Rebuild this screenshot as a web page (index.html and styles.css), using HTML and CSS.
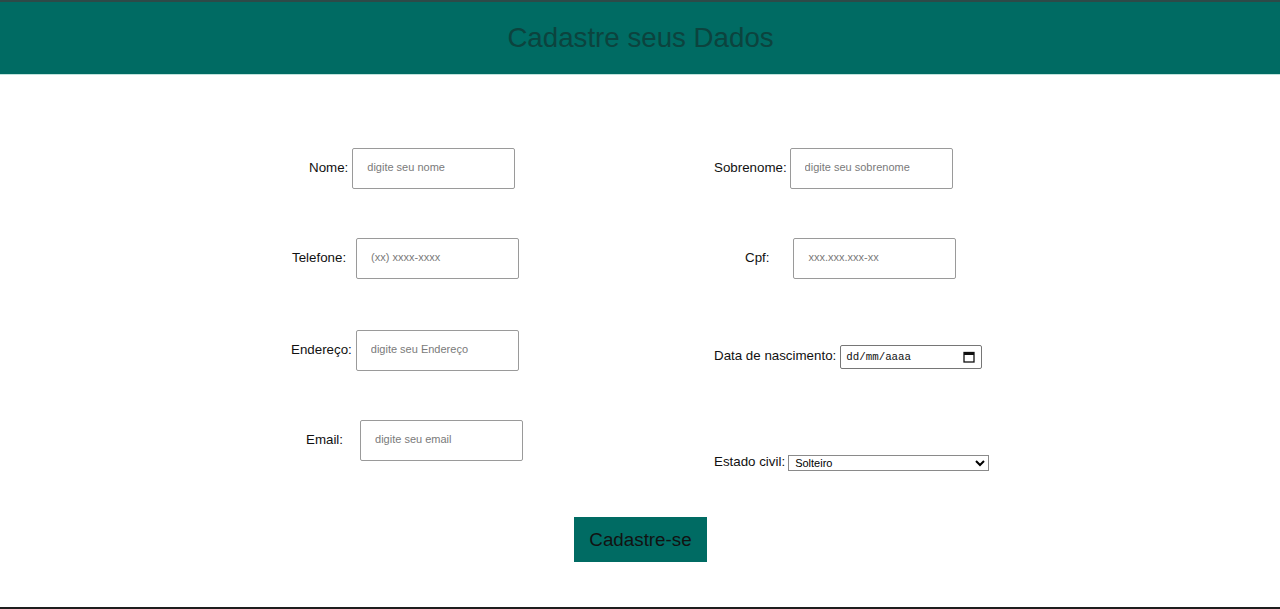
FILE: index.html
```html
<!DOCTYPE html>
<html lang="pt-BR">
<head>
<meta charset="utf-8">
<title>Cadastro</title>
<link rel="stylesheet" href="styles.css">
</head>
<body>
<header class="topbar">
  <h1 class="title">Cadastre seus Dados</h1>
</header>
<main class="main">
  <form class="form">
    <div class="columns">
      <div class="col">
        <div class="field f-nome">
          <label class="label" for="nome">Nome:</label>
          <input class="text-input" id="nome" type="text" placeholder="digite seu nome">
        </div>
        <div class="field f-tel">
          <label class="label" for="tel">Telefone:</label>
          <input class="text-input" id="tel" type="text" placeholder="(xx) xxxx-xxxx">
        </div>
        <div class="field f-end">
          <label class="label" for="end">Endereço:</label>
          <input class="text-input" id="end" type="text" placeholder="digite seu Endereço">
        </div>
        <div class="field f-email">
          <label class="label" for="email">Email:</label>
          <input class="text-input" id="email" type="text" placeholder="digite seu email">
        </div>
      </div>
      <div class="col">
        <div class="field f-sobre">
          <label class="label" for="sobre">Sobrenome:</label>
          <input class="text-input" id="sobre" type="text" placeholder="digite seu sobrenome">
        </div>
        <div class="field f-cpf">
          <label class="label" for="cpf">Cpf:</label>
          <input class="text-input" id="cpf" type="text" placeholder="xxx.xxx.xxx-xx">
        </div>
        <div class="field f-data">
          <label class="label">Data de nascimento:</label>
          <div class="date-box">
            <span class="date-text">dd/mm/aaaa</span>
            <svg class="cal" width="12" height="12" viewBox="0 0 12 12"><rect x="1" y="1.5" width="10" height="9.5" fill="none" stroke="#111" stroke-width="1.3"/><rect x="1" y="1.5" width="10" height="2.5" fill="#111"/></svg>
          </div>
        </div>
        <div class="field f-estado">
          <label class="label" for="estado">Estado civil:</label>
          <select class="select" id="estado">
            <option>Solteiro</option>
            <option>Casado</option>
            <option>Divorciado</option>
            <option>Viúvo</option>
          </select>
        </div>
      </div>
    </div>
    <div class="actions">
      <button class="btn" type="button">Cadastre-se</button>
    </div>
  </form>
</main>
<div class="bottom-line"></div>
</body>
</html>
```

FILE: styles.css
```css
* { box-sizing: border-box; }
html, body { margin: 0; padding: 0; }
body {
  font-family: "Liberation Sans", Arial, sans-serif;
  background: #fff;
  min-height: 609px;
  display: flex;
  flex-direction: column;
}
.topbar {
  height: 75px;
  background: #006b63;
  border-top: 2px solid #2d4a48;
  border-bottom: 1px solid #bfe3dc;
  display: flex;
  align-items: center;
  justify-content: center;
}
.title {
  margin: 0;
  font-weight: normal;
  font-size: 27.7px;
  color: #0c433e;
  line-height: 1;
  padding-bottom: 1px;
  padding-left: 1px;
}
.main { flex: 1; }
.form {
  width: 840px;
  margin: 0 auto;
}
.columns { display: flex; }
.col {
  width: 420px;
  display: flex;
  flex-direction: column;
  align-items: flex-start;
}
.field {
  display: flex;
  align-items: center;
}
.label {
  font-size: 13.33px;
  color: #111;
  padding-bottom: 3px;
}
.text-input {
  width: 163px;
  height: 41px;
  border: 1px solid #9a9a9a;
  border-radius: 2px;
  padding: 0 0 3px 14px;
  font-family: "Liberation Sans", Arial, sans-serif;
  font-size: 11px;
  color: #333;
  outline: none;
}
.text-input::placeholder { color: #7a7a7a; }

.f-nome { margin-top: 73px; margin-left: 89px; gap: 4px; }
.f-tel { margin-top: 49px; margin-left: 72px; gap: 10px; }
.f-end { margin-top: 51px; margin-left: 71px; gap: 4px; }
.f-email { margin-top: 49px; margin-left: 86px; gap: 17px; }

.f-sobre { margin-top: 73px; margin-left: 74px; gap: 3px; }
.f-cpf { margin-top: 49px; margin-left: 105px; gap: 24px; }
.f-data { margin-top: 66px; margin-left: 74px; gap: 4px; }
.f-estado { margin-top: 85px; margin-left: 74px; gap: 3px; }

.date-box {
  width: 142px;
  height: 24px;
  border: 1px solid #767676;
  border-radius: 2px;
  display: flex;
  align-items: center;
  justify-content: space-between;
  padding: 0 6px 0 5px;
}
.date-text {
  font-family: "Liberation Mono", "DejaVu Sans Mono", monospace;
  font-size: 10.8px;
  color: #111;
}
.cal { display: block; }
.select {
  width: 201px;
  height: 16px;
  font-family: "Liberation Sans", Arial, sans-serif;
  font-size: 11px;
  color: #000;
  border: 1px solid #8a8a8a;
  border-radius: 0;
  background: #fff;
  padding: 0 0 0 2px;
  margin: 0;
}
.actions {
  display: flex;
  justify-content: center;
  margin-top: 45px;
  padding-left: 1px;
}
.btn {
  width: 133px;
  height: 45px;
  background: #006b63;
  border: none;
  color: #121212;
  font-family: "Liberation Sans", Arial, sans-serif;
  font-size: 18.8px;
  padding: 0;
}
.bottom-line {
  height: 2px;
  background: #1e1e1e;
}
```
